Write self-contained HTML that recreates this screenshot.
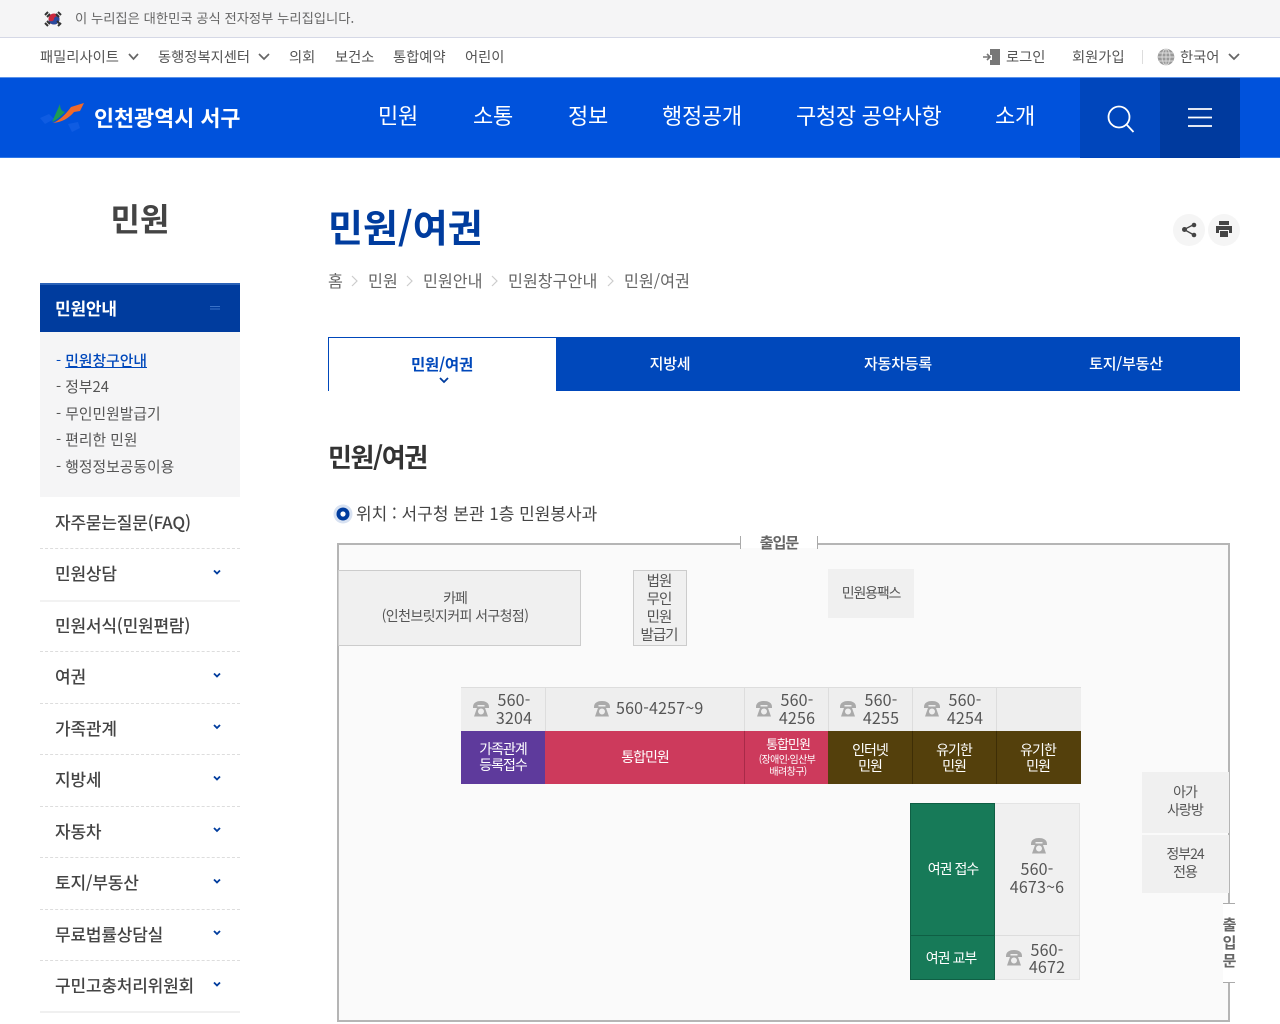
<!DOCTYPE html>
<html lang="ko"><head><meta charset="utf-8"><title>민원/여권</title>
<style>
html,body{margin:0;padding:0;background:#fff}
body{width:1280px;height:1024px;overflow:hidden;position:relative;font-family:"Noto Sans CJK KR","Liberation Sans",sans-serif;color:#444}
.t{position:absolute;white-space:nowrap;line-height:20px;height:20px}
.c{transform:translateX(-50%);text-align:center}
.b{position:absolute}
.n{color:#fff;font-size:22px;letter-spacing:-.3px;top:104px;line-height:22px;height:22px}
.s{font-size:17px;font-weight:500;left:55px;color:#444;letter-spacing:-.2px}
.d{position:absolute;left:40px;width:200px;border-top:1px dashed #ddd}
.sub{font-size:14.8px;left:56px;color:#555}
.top{font-size:14.3px;color:#555;top:47px}
.bc{font-size:16.2px;color:#666;top:270px}
.p{font-size:14px;color:#555;letter-spacing:-1px}
.w{color:#fff;font-size:14px;letter-spacing:-1px}
.ph{font-size:16px;color:#555;letter-spacing:.2px}
svg{position:absolute;overflow:visible}
.tel{fill:#aaa}
</style></head><body>

<svg width="0" height="0" style="left:0;top:0"><symbol id="tel" viewBox="0 0 16 16"><path d="M0 6C0 1.500 4 0 8 0s8 1.500 8 6v1h-4.500V4h-7v3H0z"/><path fill-rule="evenodd" d="M4.500 5.500h7L15 15.500H1zM8 7.500a3 3 0 1 0 0 6 3 3 0 0 0 0-6z"/></symbol></svg>

<div class="b" style="left:0;top:0;width:1280px;height:38px;background:#f5f5f6;border-bottom:1px solid #d5d8e6;box-sizing:border-box"></div>
<svg style="left:44px;top:10px" width="20" height="18" viewBox="0 0 20 18"><circle cx="10" cy="9" r="5.500" fill="#c9283e"/><path d="M4.500 9a5.500 5.500 0 0 0 11 0c0-1.500-1.300-2.600-2.800-2.600S10 7.800 10 9s-1.300 2.300-2.700 2.300S4.500 10.500 4.500 9z" fill="#2a4a9e"/><g stroke="#333" stroke-width="2"><path d="M1 5l3-3M3 7l3-3M14 2l3 3M12 4l3 3M1 13l3 3M3 11l3 3M14 16l3-3M16 14l-3-3"/></g></svg>
<div class="t" style="left:75px;top:8px;font-size:13.3px;color:#666">이 누리집은 대한민국 공식 전자정부 누리집입니다.</div>

<div class="t top" style="left:40px">패밀리사이트</div>
<svg style="left:128px;top:53px" width="11" height="8"><path d="M1 1l4.500 5L10 1" fill="none" stroke="#666" stroke-width="1.700"/></svg>
<div class="t top" style="left:158px">동행정복지센터</div>
<svg style="left:258px;top:53px" width="12" height="8"><path d="M1 1l5 5 5-5" fill="none" stroke="#666" stroke-width="1.700"/></svg>
<div class="t top" style="left:289px">의회</div>
<div class="t top" style="left:335px">보건소</div>
<div class="t top" style="left:393px">통합예약</div>
<div class="t top" style="left:465px">어린이</div>

<svg style="left:983px;top:49px" width="18" height="17"><path d="M7 0h10v16H7v-5h2V6H7z" fill="#777"/><path d="M0 8h6M4 5l3 3-3 3" stroke="#777" stroke-width="1.600" fill="none"/></svg>
<div class="t top" style="left:1006px">로그인</div>
<div class="t top" style="left:1072px">회원가입</div>
<div class="b" style="left:1142px;top:50px;width:1px;height:14px;background:#ddd"></div>
<svg style="left:1157px;top:48px" width="18" height="18" viewBox="0 0 18 18"><circle cx="9" cy="9" r="8.300" fill="#999"/><g fill="none" stroke="#ddd" stroke-width=".9"><ellipse cx="9" cy="9" rx="4" ry="8"/><path d="M9 1v16M1 9h16M2 5h14M2 13h14"/></g></svg>
<div class="t top" style="left:1180px">한국어</div>
<svg style="left:1228px;top:53px" width="12" height="8"><path d="M1 1l5 5 5-5" fill="none" stroke="#666" stroke-width="1.800"/></svg>

<div class="b" style="left:0;top:77px;width:1280px;height:81px;background:#0052dc;border-top:1px solid #5c93ea;box-sizing:border-box;border-bottom:1px solid #2f78e8"></div>
<div class="b" style="left:1080px;top:78px;width:80px;height:80px;background:#0046bc"></div>
<div class="b" style="left:1160px;top:78px;width:80px;height:80px;background:#003a9e"></div>

<svg style="left:40px;top:100px" width="50" height="35" viewBox="0 0 50 35"><path d="M0 18l9-4 5 5-9 5z" fill="#0f5ce2"/><path d="M28 24l10-2 2 6-8 4z" fill="#0f5ce2"/><path d="M12 22L20 4c0 4 1 7 5 8-4 4-8 8-13 10z" fill="#1d9a54"/><path d="M13 23c7-3 13-9 18-16l13-4-4 8-6 1c-6 7-12 10-21 11z" fill="#f0692a"/></svg>
<div class="t" style="left:94px;top:105px;height:26px;line-height:26px;font-size:21.8px;font-weight:700;color:#fff">인천광역시 서구</div>

<div class="t n" style="left:378px">민원</div>
<div class="t n" style="left:473px">소통</div>
<div class="t n" style="left:568px">정보</div>
<div class="t n" style="left:662px">행정공개</div>
<div class="t n" style="left:796px">구청장 공약사항</div>
<div class="t n" style="left:995px">소개</div>

<svg style="left:1107px;top:105px" width="28" height="28"><circle cx="12" cy="12" r="10.500" fill="none" stroke="#fff" stroke-width="1.800"/><path d="M19.500 19.500L26.500 27" stroke="#fff" stroke-width="1.800"/></svg>
<svg style="left:1188px;top:108px" width="24" height="20"><path d="M0 1h24M0 9.500h24M0 18h24" stroke="#fff" stroke-width="1.800"/></svg>

<!-- sidebar -->
<div class="t c" style="left:140px;top:198px;height:40px;line-height:40px;font-size:32px;font-weight:700;color:#444">민원</div>
<div class="b" style="left:40px;top:283px;width:200px;height:49px;background:#003c9e;border-top:2px solid #2a62b8;box-sizing:border-box"></div>
<div class="t" style="left:55px;top:298px;color:#fff;font-size:17px;font-weight:700;letter-spacing:-.2px">민원안내</div>
<svg style="left:210px;top:306px" width="10" height="4"><path d="M0 .5h10M0 3h10" stroke="#3a72c8" stroke-width="1"/></svg>
<div class="b" style="left:40px;top:332px;width:200px;height:165px;background:#f5f5f6"></div>
<div class="t sub" style="top:351px;color:#0048bb">- <span style="font-weight:500;text-decoration:underline">민원창구안내</span></div>
<div class="t sub" style="top:377px">- 정부24</div>
<div class="t sub" style="top:404px">- 무인민원발급기</div>
<div class="t sub" style="top:430px">- 편리한 민원</div>
<div class="t sub" style="top:457px">- 행정정보공동이용</div>

<div class="t s" style="top:512px">자주묻는질문(FAQ)</div><div class="d" style="top:548px"></div>
<div class="t s" style="top:563px">민원상담</div><div class="d" style="top:600px;border-top:2px solid #f2f2f2"></div>
<div class="t s" style="top:615px">민원서식(민원편람)</div><div class="d" style="top:651px"></div>
<div class="t s" style="top:666px">여권</div><div class="d" style="top:703px"></div>
<div class="t s" style="top:718px">가족관계</div><div class="d" style="top:754px"></div>
<div class="t s" style="top:769px">지방세</div><div class="d" style="top:806px"></div>
<div class="t s" style="top:821px">자동차</div><div class="d" style="top:857px"></div>
<div class="t s" style="top:872px">토지/부동산</div><div class="d" style="top:909px"></div>
<div class="t s" style="top:924px">무료법률상담실</div><div class="d" style="top:960px"></div>
<div class="t s" style="top:975px">구민고충처리위원회</div>
<div class="b" style="left:40px;top:1011px;width:200px;height:2px;background:#f0f0f0"></div>
<svg style="left:213px;top:569px" width="8" height="420" fill="none" stroke="#003c9e" stroke-width="1.800"><path d="M1 1.500l3 3 3-3M1 104.500l3 3 3-3M1 156l3 3 3-3M1 207.500l3 3 3-3M1 259l3 3 3-3M1 310.500l3 3 3-3M1 362l3 3 3-3M1 413.500l3 3 3-3"/></svg>

<!-- main head -->
<div class="t" style="left:328px;top:201px;height:50px;line-height:50px;font-size:38px;font-weight:700;color:#003c9e">민원/여권</div>
<div class="b" style="left:1173px;top:214px;width:32px;height:32px;border-radius:50%;background:#f5f5f5"></div>
<div class="b" style="left:1208px;top:214px;width:32px;height:32px;border-radius:50%;background:#f5f5f5"></div>
<svg style="left:1181px;top:222px" width="16" height="16"><path d="M13 2.500L3 7.500l10 5.500" fill="none" stroke="#444" stroke-width="1.300"/><circle cx="13" cy="3" r="2.300" fill="#444"/><circle cx="3.500" cy="7.500" r="2.500" fill="#444"/><circle cx="13" cy="13" r="2.300" fill="#444"/></svg>
<svg style="left:1216px;top:221px" width="16" height="16"><path d="M3 0h10v4H3zM0 5h16v7h-3V9H3v3H0zM4 10h8v6H4z" fill="#444"/></svg>

<div class="t bc" style="left:328px">홈</div>
<div class="t bc" style="left:368px">민원</div>
<div class="t bc" style="left:423px">민원안내</div>
<div class="t bc" style="left:508px">민원창구안내</div>
<div class="t bc" style="left:624px">민원/여권</div>
<svg style="left:351px;top:275px" width="270" height="12" fill="none" stroke="#ccc" stroke-width="1.200"><path d="M1 1l5 5-5 5M56 1l5 5-5 5M141 1l5 5-5 5M257 1l5 5-5 5"/></svg>

<!-- tabs -->
<div class="b" style="left:328px;top:337px;width:229px;height:54px;border:1px solid #0048bb;border-bottom:0;border-right:0;box-sizing:border-box"></div>
<div class="b" style="left:556px;top:337px;width:684px;height:54px;background:#0048bb"></div>
<div class="t c" style="left:442px;top:354px;font-size:15.500px;font-weight:700;color:#0048bb;letter-spacing:-.2px">민원/여권</div>
<svg style="left:439px;top:377px" width="10" height="7"><path d="M1 1l4 4 4-4" fill="none" stroke="#003c9e" stroke-width="1.800"/></svg>
<div class="t c" style="left:670px;top:354px;font-size:15px;color:#fff;font-weight:500;letter-spacing:-.2px">지방세</div>
<div class="t c" style="left:898px;top:354px;font-size:15px;color:#fff;font-weight:500;letter-spacing:-.2px">자동차등록</div>
<div class="t c" style="left:1126px;top:354px;font-size:15px;color:#fff;font-weight:500;letter-spacing:-.2px">토지/부동산</div>

<div class="t" style="left:328px;top:442px;height:30px;line-height:30px;font-size:26px;font-weight:700;color:#333;letter-spacing:-1.4px">민원/여권</div>

<svg style="left:333px;top:504px" width="20" height="20"><circle cx="10" cy="10" r="9.500" fill="#d8e2f2"/><circle cx="10" cy="10" r="6.500" fill="#003c9e"/><circle cx="10" cy="10" r="2.600" fill="#fff"/></svg>
<div class="t" style="left:356px;top:503px;font-size:17px;color:#444">위치 : 서구청 본관 1층 민원봉사과</div>

<!-- floor plan -->
<div class="b" style="left:337px;top:543px;width:893px;height:479px;background:#fafafa;border:2px solid #b5b5b5;box-sizing:border-box"></div>
<div class="b" style="left:741px;top:538px;width:76px;height:10px;background:#fff"></div>
<div class="b" style="left:740px;top:536px;width:1px;height:13px;background:#aaa"></div>
<div class="b" style="left:817px;top:536px;width:1px;height:13px;background:#aaa"></div>
<div class="t c p" style="left:779px;top:533px;font-weight:700;color:#666;font-size:15px">출입문</div>
<div class="b" style="left:1223px;top:903px;width:12px;height:80px;background:#fff"></div>
<div class="b" style="left:1223px;top:903px;width:12px;height:1px;background:#aaa"></div>
<div class="b" style="left:1223px;top:982px;width:12px;height:1px;background:#aaa"></div>
<div class="t c p" style="left:1229px;top:915px;font-weight:700;color:#666;font-size:15px">출</div>
<div class="t c p" style="left:1229px;top:933px;font-weight:700;color:#666;font-size:15px">입</div>
<div class="t c p" style="left:1229px;top:951px;font-weight:700;color:#666;font-size:15px">문</div>

<div class="b" style="left:338px;top:570px;width:243px;height:76px;background:#f0f0f0;border:1px solid #ccc;box-sizing:border-box"></div>
<div class="t c p" style="left:455px;top:588px">카페</div>
<div class="t c p" style="left:455px;top:606px;letter-spacing:-.6px">(인천브릿지커피 서구청점)</div>

<div class="b" style="left:633px;top:570px;width:54px;height:76px;background:#f0f0f0;border:1px solid #ccc;box-sizing:border-box"></div>
<div class="t c p" style="left:659px;top:571px;font-size:14.5px">법원</div>
<div class="t c p" style="left:659px;top:589px;font-size:14.5px">무인</div>
<div class="t c p" style="left:659px;top:607px;font-size:14.5px">민원</div>
<div class="t c p" style="left:659px;top:625px;font-size:14.5px">발급기</div>

<div class="b" style="left:828px;top:569px;width:86px;height:49px;background:#f0f0f0"></div>
<div class="t c p" style="left:871px;top:583px;letter-spacing:-1.2px">민원용팩스</div>

<div class="b" style="left:461px;top:687px;width:620px;height:44px;background:#eee;border-top:1px solid #ddd;box-sizing:border-box"></div>
<div class="b" style="left:461px;top:731px;width:84px;height:53px;background:#5e3a9c"></div>
<div class="b" style="left:545px;top:731px;width:199px;height:53px;background:#cd3a5c"></div>
<div class="b" style="left:744px;top:731px;width:84px;height:53px;background:#cd3a5c;border-left:1px solid #a82a48;box-sizing:border-box"></div>
<div class="b" style="left:828px;top:731px;width:253px;height:53px;background:#54400c"></div>
<svg style="left:461px;top:687px" width="620" height="98"><path d="M84.500 0v44M283.500 0v44M367.500 0v44M451.500 0v44M535.500 0v44" stroke="#ddd"/><path d="M451.500 44v53M535.500 44v53" stroke="#3e2e06"/></svg>

<svg class="tel" style="left:473px;top:701px" width="16" height="16"><use href="#tel"/></svg>
<div class="t c ph" style="left:514px;top:689px">560-</div>
<div class="t c ph" style="left:514px;top:707px">3204</div>
<svg class="tel" style="left:594px;top:701px" width="16" height="16"><use href="#tel"/></svg>
<div class="t ph" style="left:616px;top:697px">560-4257~9</div>
<svg class="tel" style="left:756px;top:701px" width="16" height="16"><use href="#tel"/></svg>
<div class="t c ph" style="left:797px;top:689px">560-</div>
<div class="t c ph" style="left:797px;top:707px">4256</div>
<svg class="tel" style="left:840px;top:701px" width="16" height="16"><use href="#tel"/></svg>
<div class="t c ph" style="left:881px;top:689px">560-</div>
<div class="t c ph" style="left:881px;top:707px">4255</div>
<svg class="tel" style="left:924px;top:701px" width="16" height="16"><use href="#tel"/></svg>
<div class="t c ph" style="left:965px;top:689px">560-</div>
<div class="t c ph" style="left:965px;top:707px">4254</div>

<div class="t c w" style="left:503px;top:739px">가족관계</div>
<div class="t c w" style="left:503px;top:755px">등록접수</div>
<div class="t c w" style="left:645px;top:747px">통합민원</div>
<div class="t c w" style="left:788px;top:734px;font-size:13px">통합민원</div>
<div class="t c w" style="left:787px;top:749px;font-size:10px;letter-spacing:-.6px">(장애인·임산부</div>
<div class="t c w" style="left:788px;top:761px;font-size:10px;letter-spacing:-.6px">배려창구)</div>
<div class="t c w" style="left:870px;top:740px">인터넷</div>
<div class="t c w" style="left:870px;top:756px">민원</div>
<div class="t c w" style="left:954px;top:740px">유기한</div>
<div class="t c w" style="left:954px;top:756px">민원</div>
<div class="t c w" style="left:1038px;top:740px">유기한</div>
<div class="t c w" style="left:1038px;top:756px">민원</div>

<div class="b" style="left:910px;top:803px;width:85px;height:177px;background:#177a58;border:1px solid #0f5f44;box-sizing:border-box"></div>
<div class="b" style="left:911px;top:935px;width:83px;height:1px;background:#0f5f44"></div>
<div class="b" style="left:995px;top:803px;width:85px;height:177px;background:#f0f0f0;border:1px solid #e4e4e4;border-left:0;box-sizing:border-box"></div>
<div class="b" style="left:995px;top:935px;width:85px;height:1px;background:#ddd"></div>
<div class="t c w" style="left:953px;top:859px">여권 접수</div>
<div class="t c w" style="left:951px;top:948px">여권 교부</div>
<svg class="tel" style="left:1031px;top:838px" width="16" height="16"><use href="#tel"/></svg>
<div class="t c ph" style="left:1037px;top:858px">560-</div>
<div class="t c ph" style="left:1037px;top:876px">4673~6</div>
<svg class="tel" style="left:1006px;top:950px" width="16" height="16"><use href="#tel"/></svg>
<div class="t c ph" style="left:1047px;top:939px">560-</div>
<div class="t c ph" style="left:1047px;top:956px">4672</div>

<div class="b" style="left:1142px;top:772px;width:87px;height:61px;background:#f0f0f0"></div>
<div class="b" style="left:1142px;top:835px;width:87px;height:58px;background:#f0f0f0"></div>
<div class="t c p" style="left:1185px;top:782px">아가</div>
<div class="t c p" style="left:1185px;top:800px">사랑방</div>
<div class="t c p" style="left:1185px;top:844px">정부24</div>
<div class="t c p" style="left:1185px;top:862px">전용</div>

</body></html>
